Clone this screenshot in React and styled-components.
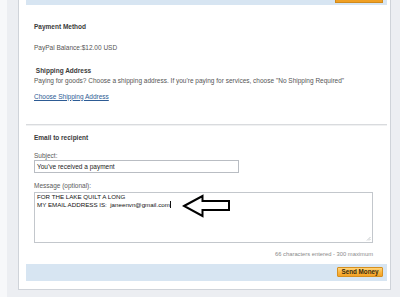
import styled, { createGlobalStyle } from "styled-components";

const GlobalStyle = createGlobalStyle`
  html, body {
    margin: 0;
    padding: 0;
    background: #f7f8fa;
    overflow: hidden;
  }
  body {
    font-family: "Liberation Sans", Arial, sans-serif;
  }
`;

const Page = styled.div`
  width: 393px;
  height: 297px;
  margin-left: 7px;
  padding: 0 9px 0 11px;
  box-sizing: border-box;
  background: #eceef2;
`;

const Card = styled.div`
  background: #ffffff;
  border: 1px solid #cfd3d9;
  border-top: none;
  padding: 0 3px 8px 7px;
`;

const ActionBar = styled.div`
  display: flex;
  justify-content: flex-end;
  align-items: ${({ $top }) => ($top ? "flex-start" : "center")};
  height: ${({ $top }) => ($top ? "5px" : "17.4px")};
  padding-right: 4px;
  background: #d7e5f2;
`;

const ButtonStub = styled.div`
  width: 46px;
  height: 1.5px;
  background: #f0a024;
  border: 0 solid #d08a1c;
  border-width: 0 1px 1px;
`;

const SendButton = styled.button`
  height: 10px;
  width: 46px;
  margin-top: -1px;
  padding: 0;
  border: 1px solid #d7901f;
  border-radius: 1px;
  background: linear-gradient(180deg, #ffd47a 0%, #fbb53d 55%, #f3a126 100%);
  font-family: inherit;
  font-size: 6.3px;
  font-weight: 700;
  color: #3b2b0c;
  line-height: 8px;
  cursor: pointer;
`;

const Section = styled.section`
  padding: ${({ $pad }) => $pad};
  ${({ $divided }) =>
    $divided &&
    `border-top: 1px solid #d9dbde; box-shadow: inset 0 1px 0 #f0f1f2;`}
`;

const Heading = styled.div`
  font-size: 6.5px;
  font-weight: 700;
  line-height: 9px;
  color: #3a3a3a;
  margin-top: ${({ $mt = 0 }) => $mt}px;
`;

const Text = styled.div`
  font-size: ${({ $size = 6.5 }) => $size}px;
  line-height: ${({ $lh = 9 }) => $lh}px;
  color: #555555;
  margin-top: ${({ $mt = 0 }) => $mt}px;
  white-space: nowrap;
`;

const LinkText = styled.a`
  display: block;
  font-size: 6.5px;
  line-height: 9px;
  color: #2d5b94;
  text-decoration: underline;
  margin-top: 7px;
`;

const Label = styled.div`
  font-size: 6.5px;
  line-height: 8px;
  color: #5a5a5a;
  margin-top: ${({ $mt = 0 }) => $mt}px;
`;

const Input = styled.div`
  width: 205px;
  height: 13.3px;
  box-sizing: border-box;
  border: 1px solid #b9bdc3;
  padding: 0 2px;
  font-size: 6.5px;
  line-height: 11.3px;
  color: #222222;
`;

const MessageBox = styled.div`
  position: relative;
  margin-top: 1.6px;
  height: 51px;
  box-sizing: border-box;
  border: 1px solid #c3c7cc;
  padding: 0 2px;
  font-size: 6.2px;
  line-height: 8.3px;
  color: #111111;
  text-transform: uppercase;
`;

const Lower = styled.span`
  text-transform: none;
`;

const Caret = styled.span`
  display: inline-block;
  width: 0.6px;
  height: 7px;
  margin-left: 0.5px;
  vertical-align: -1px;
  background: #111;
`;

const Grip = styled.svg`
  position: absolute;
  right: 1px;
  bottom: 1px;
`;

const Annotation = styled.svg`
  position: absolute;
  left: 147px;
  top: 1px;
`;

const Counter = styled.div`
  text-align: right;
  font-size: 5.8px;
  line-height: 8px;
  color: #8a8a8a;
  margin-top: 6.7px;
`;

export default function App() {
  return (
    <>
      <GlobalStyle />
      <Page>
        <Card>
          <ActionBar $top>
            <ButtonStub />
          </ActionBar>

          <Section $pad="17px 14px 23.5px 8px">
            <Heading>Payment Method</Heading>
            <Text $mt={12}>PayPal Balance:$12.00 USD</Text>
            <Heading $mt={13.5}>&nbsp;Shipping Address</Heading>
            <Text $mt={1}>
              Paying for goods? Choose a shipping address. If you're paying for services, choose "No Shipping Required"
            </Text>
            <LinkText href="#">Choose Shipping Address</LinkText>
          </Section>

          <Section $divided $pad="8px 14px 6.3px 8px">
            <Heading>Email to recipient</Heading>
            <Label $mt={9.8}>Subject:</Label>
            <Input>You've received a payment</Input>
            <Label $mt={9.4}>Message (optional):</Label>
            <MessageBox>
              FOR THE LAKE QUILT A LONG
              <br />
              MY EMAIL ADDRESS IS:&nbsp; <Lower>janeenvn@gmail.com</Lower>
              <Caret />
              <Annotation width="50" height="24" viewBox="0 0 50 24">
                <polygon
                  points="2,12 20.5,2 20.5,7 47,7 47,16 20.5,16 20.5,22"
                  fill="#ffffff"
                  stroke="#000000"
                  strokeWidth="2"
                  strokeLinejoin="miter"
                />
              </Annotation>
              <Grip width="5" height="5" viewBox="0 0 5 5">
                <path d="M4.5 1 L1 4.5 M4.5 3 L3 4.5" stroke="#a0a4aa" strokeWidth="0.6" />
              </Grip>
            </MessageBox>
            <Counter>66 characters entered - 300 maximum</Counter>
          </Section>

          <ActionBar>
            <SendButton>Send Money</SendButton>
          </ActionBar>
        </Card>
      </Page>
    </>
  );
}
